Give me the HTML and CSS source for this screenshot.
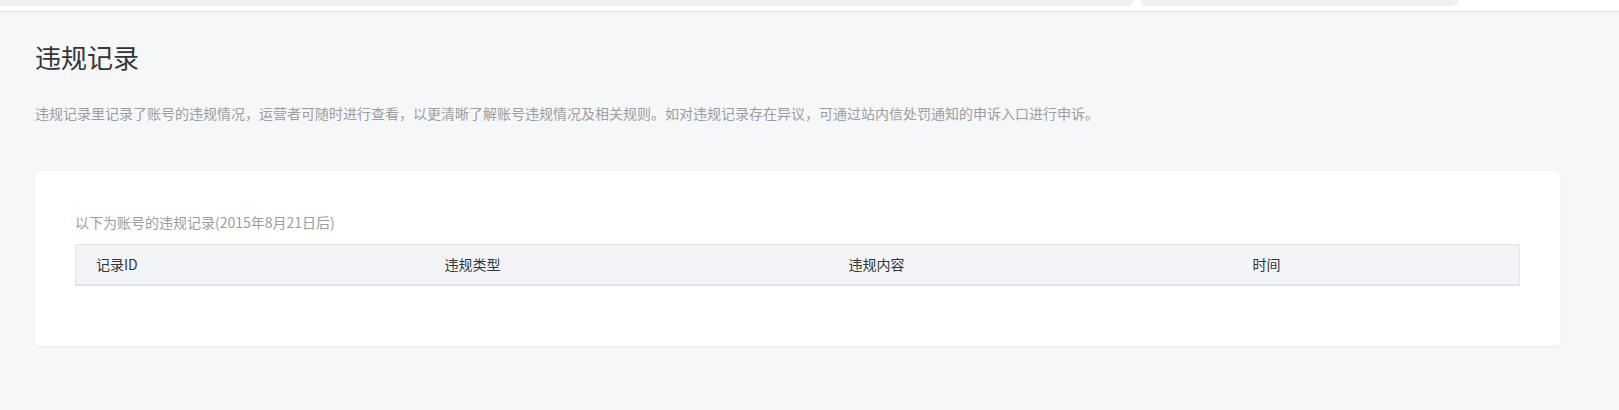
FILE: index.html
```html
<!DOCTYPE html>
<html lang="zh-CN">
<head>
    <meta charset="UTF-8">
    <title>违规记录</title>
    <link rel="stylesheet" href="styles.css">
</head>
<body>
    <div class="topbar">
        <div class="topbar-tab main"></div>
        <div class="topbar-tab side"></div>
    </div>

    <div class="page">
        <h1 class="page-title">违规记录</h1>
        <p class="page-desc">违规记录里记录了账号的违规情况，运营者可随时进行查看，以更清晰了解账号违规情况及相关规则。如对违规记录存在异议，可通过站内信处罚通知的申诉入口进行申诉。</p>

        <div class="card">
            <div class="card-tip">以下为账号的违规记录(2015年8月21日后)</div>
            <table class="record-table">
                <thead>
                    <tr>
                        <th class="col-id">记录ID</th>
                        <th class="col-type">违规类型</th>
                        <th class="col-content">违规内容</th>
                        <th class="col-time">时间</th>
                    </tr>
                </thead>
            </table>
        </div>
    </div>
</body>
</html>
```

FILE: styles.css
```css
* {
    margin: 0;
    padding: 0;
    box-sizing: border-box;
}

body {
    font-family: "Noto Sans CJK SC", "Liberation Sans", sans-serif;
    background: #f6f7f9;
    color: #353535;
    min-height: 100vh;
}

.topbar {
    height: 12px;
    background: white;
    border-bottom: 1px solid #e4e5e9;
    display: flex;
    gap: 8px;
}

.topbar-tab {
    height: 6px;
    background: #f0f0f0;
    border-radius: 0 0 5px 5px;
}

.topbar-tab.main {
    width: 1133px;
    border-radius: 0 0 5px 0;
}

.topbar-tab.side {
    width: 317px;
}

.page {
    padding: 0 59px 0 35px;
}

.page-title {
    font-size: 26px;
    font-weight: 400;
    line-height: 36px;
    margin-top: 27px;
    color: #353535;
}

.page-desc {
    font-size: 14px;
    line-height: 20px;
    color: #9d9d9d;
    margin-top: 28px;
}

.card {
    margin-top: 48px;
    background: white;
    border-radius: 4px;
    padding: 41px 40px 60px;
    box-shadow: 0 1px 2px rgba(150, 150, 160, 0.12);
}

.card-tip {
    font-size: 14px;
    line-height: 20px;
    color: #9d9d9d;
}

.record-table {
    width: 100%;
    margin-top: 12px;
    border-collapse: collapse;
    table-layout: fixed;
    font-size: 14px;
}

.record-table th {
    background: #f3f4f7;
    font-weight: 400;
    text-align: left;
    height: 40px;
    padding: 0 0 0 20px;
    color: #353535;
    border-top: 1px solid #e4e4ea;
    border-bottom: 2px solid #e2e2ea;
}

.record-table th:first-child {
    border-left: 1px solid #e4e4ea;
}

.record-table th:last-child {
    border-right: 1px solid #e4e4ea;
}

.col-id {
    width: 349px;
}

.col-type {
    width: 404px;
}

.col-content {
    width: 404px;
}
```
